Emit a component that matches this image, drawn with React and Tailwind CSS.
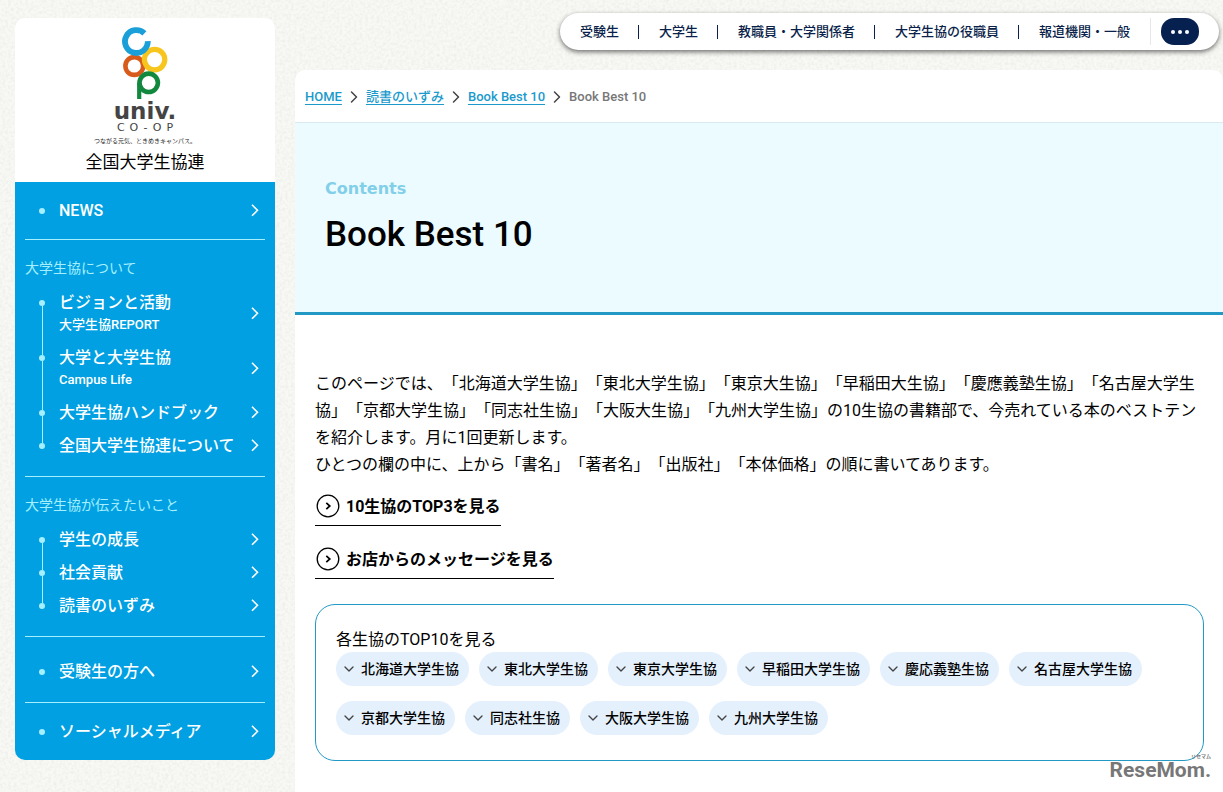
import { ChevronDown, ChevronRight } from "lucide-react";

const audiences = [
  "受験生",
  "大学生",
  "教職員・大学関係者",
  "大学生協の役職員",
  "報道機関・一般",
];

const aboutItems = [
  { title: "ビジョンと活動", sub: "大学生協REPORT" },
  { title: "大学と大学生協", sub: "Campus Life" },
  { title: "大学生協ハンドブック" },
  { title: "全国大学生協連について" },
];

const messageItems = [
  { title: "学生の成長" },
  { title: "社会貢献" },
  { title: "読書のいずみ" },
];

const crumbs = ["HOME", "読書のいずみ", "Book Best 10"];

const shops = [
  "北海道大学生協",
  "東北大学生協",
  "東京大学生協",
  "早稲田大学生協",
  "慶応義塾生協",
  "名古屋大学生協",
  "京都大学生協",
  "同志社生協",
  "大阪大学生協",
  "九州大学生協",
];

function PaperTexture() {
  return (
    <svg className="absolute inset-0 h-full w-full" aria-hidden="true">
      <filter id="paper">
        <feTurbulence type="fractalNoise" baseFrequency="0.35" numOctaves="3" seed="4" />
        <feColorMatrix values="0 0 0 0 0.5  0 0 0 0 0.5  0 0 0 0 0.44  0.35 0 0 0 -0.13" />
      </filter>
      <rect width="100%" height="100%" filter="url(#paper)" />
    </svg>
  );
}

function Logo() {
  return (
    <a href="#" className="flex h-[164px] flex-col items-center rounded-t-[10px] bg-white pt-[7px]">
      <svg width="50" height="74" viewBox="0 0 50 74" fill="none" aria-hidden="true">
        <circle cx="14.3" cy="41" r="8.9" stroke="#d95b1b" strokeWidth="4.6" />
        <circle cx="34.6" cy="34.6" r="10.2" stroke="#f7c51e" strokeWidth="5.2" />
        <path d="M24.4 8.4 A11.4 11.4 0 1 0 27.8 16.2" stroke="#1b9fd8" strokeWidth="5.8" />
        <circle cx="28.7" cy="57.8" r="9.2" stroke="#12883f" strokeWidth="4.6" />
        <path d="M19.2 57.8 V74" stroke="#12883f" strokeWidth="4.2" />
      </svg>
      <span className="font-['DejaVu_Sans'] text-[23px] leading-[24px] font-bold text-[#444]">univ.</span>
      <span className="pl-[5px] font-['DejaVu_Sans'] text-[11px] leading-[9px] tracking-[5px] text-[#444]">
        CO-OP
      </span>
      <span className="mt-1 text-[6px] leading-[10px] text-[#222]">
        つながる元気、ときめきキャンパス。
      </span>
      <span className="mt-1 text-[17px] leading-[24px] text-black">全国大学生協連</span>
    </a>
  );
}

function NavItem({ title, sub, first, last }) {
  return (
    <li>
      <a
        href="#"
        className={`flex items-center pr-1.5 pl-[14px] text-white ${sub ? "h-[55px]" : "h-[33px]"}`}
      >
        <span className="flex w-1.5 flex-col items-center self-stretch text-[#a5efff]">
          <span className={`h-[14px] w-px ${first ? "" : "bg-current"}`} />
          <span className="h-1.5 w-1.5 rounded-full bg-current" />
          <span className={`w-px flex-1 ${last ? "" : "bg-current"}`} />
        </span>
        <span className="ml-[14px] flex-1 whitespace-nowrap">
          <span className="block text-[16px] leading-[22px] font-medium">{title}</span>
          {sub && <span className="block text-[13px] leading-[21px] font-medium">{sub}</span>}
        </span>
        <svg width="8" height="14" viewBox="0 0 8 14" fill="none" stroke="currentColor" strokeWidth="1.6">
          <path d="M1 0.8 L6.5 6.3 L1 11.8" />
        </svg>
      </a>
    </li>
  );
}

function NavGroup({ label, items }) {
  return (
    <section className="border-b border-[#a5efff] pt-[18px] pb-[14px]">
      <h2 className="mb-2 text-[14px] leading-[20px] text-[#a5efff]">{label}</h2>
      <ul>
        {items.map((item, i) => (
          <NavItem key={item.title} {...item} first={i === 0} last={i === items.length - 1} />
        ))}
      </ul>
    </section>
  );
}

function Sidebar() {
  return (
    <aside className="mt-[18px] ml-[15px] w-[260px] shrink-0 self-start">
      <Logo />
      <nav className="rounded-b-[10px] bg-[#00a0e2] px-[10px]">
        <ul className="border-b border-[#a5efff] py-3">
          <NavItem title="NEWS" first last />
        </ul>
        <NavGroup label="大学生協について" items={aboutItems} />
        <NavGroup label="大学生協が伝えたいこと" items={messageItems} />
        <ul className="border-b border-[#a5efff] pt-[18px] pb-[14px]">
          <NavItem title="受験生の方へ" first last />
        </ul>
        <ul className="py-3">
          <NavItem title="ソーシャルメディア" first last />
        </ul>
      </nav>
    </aside>
  );
}

function TopMenu() {
  return (
    <header className="flex h-[70px] items-start justify-end pt-[13px] pr-1">
      <div className="flex h-[37px] items-center rounded-full bg-white pr-5 shadow-[0_2px_5px_rgba(0,0,0,0.55)]">
        <ul className="flex items-center pr-px">
          {audiences.map((name, i) => (
            <li
              key={name}
              className={`pr-[19px] pl-5 text-[13px] leading-[14px] font-medium whitespace-nowrap text-[#0b1f4b] ${
                i > 0 ? "border-l border-[#0b1f4b]" : ""
              }`}
            >
              <a href="#">{name}</a>
            </li>
          ))}
        </ul>
        <div className="flex border-l border-gray-200 pl-[10px]">
          <button
            type="button"
            aria-label="メニュー"
            className="flex h-[27px] w-[38px] items-center justify-center gap-[3px] rounded-[13px] bg-[#06204f]"
          >
            <span className="h-1 w-1 rounded-full bg-white" />
            <span className="h-1 w-1 rounded-full bg-white" />
            <span className="h-1 w-1 rounded-full bg-white" />
          </button>
        </div>
      </div>
    </header>
  );
}

function Breadcrumb() {
  return (
    <nav className="border-b border-[#d9e9ef] px-[10px] pt-[17px] pb-[15px]">
      <ol className="flex items-center text-[13px] leading-[20px] font-medium">
        {crumbs.map((name) => (
          <li key={name} className="flex items-center">
            <a href="#" className="text-[#1b9acb] underline underline-offset-3">
              {name}
            </a>
            <ChevronRight className="mx-0.5 h-5 w-5 text-[#444]" strokeWidth={1.8} />
          </li>
        ))}
        <li className="text-[#777]">Book Best 10</li>
      </ol>
    </nav>
  );
}

function ArrowLink({ children }) {
  return (
    <a
      href="#"
      className="flex items-center gap-[6px] border-b border-black pb-[6px] pl-[1px] text-[16px] leading-[24px] font-bold"
    >
      <svg width="24" height="24" viewBox="0 0 24 24" fill="none" stroke="currentColor" aria-hidden="true">
        <circle cx="12" cy="12" r="10.8" strokeWidth="1.3" />
        <path d="M10.3 8.8 L13.8 12 L10.3 15.2" strokeWidth="1.7" />
      </svg>
      <span className="pt-0.5">{children}</span>
    </a>
  );
}

function ShopList() {
  return (
    <section className="mt-[25px] rounded-[20px] border border-[#2299c4] px-5 pt-[22px] pb-[25px]">
      <h2 className="text-[16px] leading-[25px]">各生協のTOP10を見る</h2>
      <ul className="flex flex-wrap gap-x-[10px] gap-y-[15px]">
        {shops.map((name) => (
          <li key={name}>
            <a
              href="#"
              className="flex h-[34px] items-center gap-1 rounded-full bg-[#e5f0fd] pr-[10px] pl-[5px] text-[14px] font-medium"
            >
              <ChevronDown className="h-4 w-4 text-[#444]" strokeWidth={2} />
              {name}
            </a>
          </li>
        ))}
      </ul>
    </section>
  );
}

export default function App() {
  return (
    <div
      lang="ja"
      className="relative flex min-h-screen bg-[#f8f8f5] font-['Roboto','Noto_Sans_CJK_JP',sans-serif] text-black [text-spacing-trim:space-all]"
    >
      <PaperTexture />
      <div className="relative flex min-w-0 flex-1">
        <Sidebar />
        <div className="ml-5 flex min-w-0 flex-1 flex-col">
          <TopMenu />
          <main className="flex-1 rounded-t-[10px] bg-white">
            <Breadcrumb />
            <div className="border-b-3 border-[#2299c4] bg-[#ecfbff] px-[30px] pt-[54px] pb-[50px]">
              <p className="font-['DejaVu_Sans'] text-[16px] leading-[24px] font-bold text-[#82cfe9]">
                Contents
              </p>
              <h1 className="mt-[7px] text-[35px] leading-[54px] font-medium">Book Best 10</h1>
            </div>
            <div className="pt-[55px] pr-[19px] pb-8 pl-5">
              <p className="text-[16px] leading-[27px]">
                このページでは、「北海道大学生協」「東北大学生協」「東京大生協」「早稲田大生協」「慶應義塾生協」「名古屋大学生協」「京都大学生協」「同志社生協」「大阪大生協」「九州大学生協」の10生協の書籍部で、今売れている本のベストテンを紹介します。月に1回更新します。
                <br />
                ひとつの欄の中に、上から「書名」「著者名」「出版社」「本体価格」の順に書いてあります。
              </p>
              <div className="mt-[15px] flex flex-col items-start gap-5">
                <ArrowLink>10生協のTOP3を見る</ArrowLink>
                <ArrowLink>お店からのメッセージを見る</ArrowLink>
              </div>
              <ShopList />
            </div>
          </main>
        </div>
      </div>
      <div className="absolute right-3 bottom-[14px] flex flex-col items-end gap-0.5 text-[#777]">
        <p className="text-[5px] leading-[5px] font-bold">リセマム</p>
        <p className="text-[21px] leading-[18px] font-bold [text-shadow:0_0_2px_#fff,0_0_2px_#fff]">
          ReseMom.
        </p>
      </div>
    </div>
  );
}
